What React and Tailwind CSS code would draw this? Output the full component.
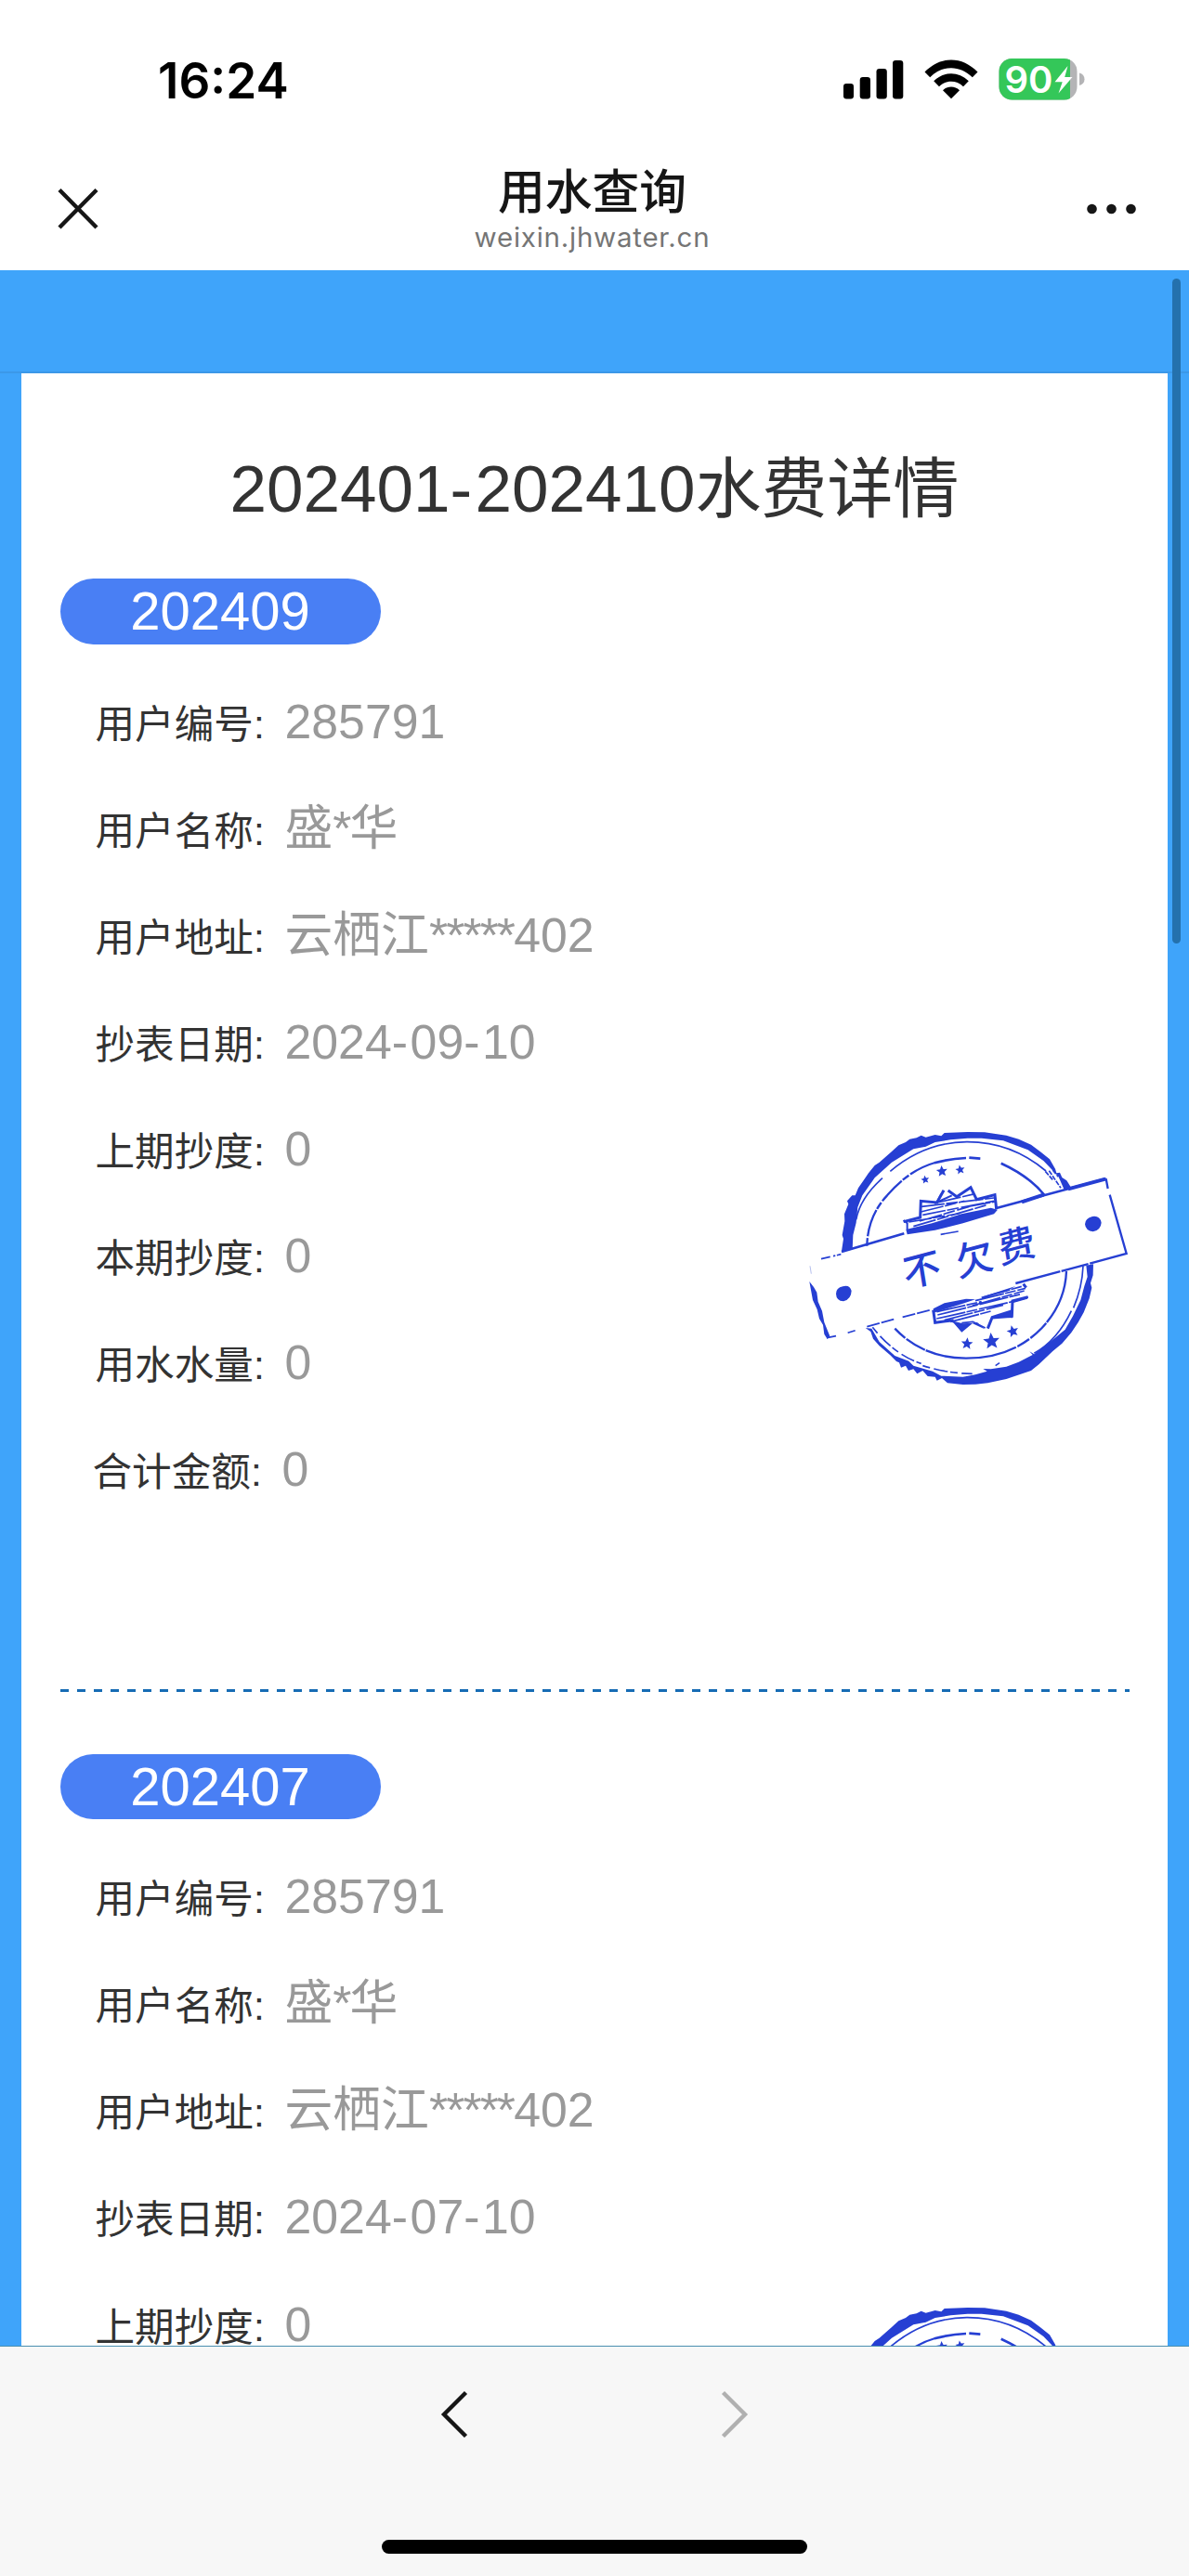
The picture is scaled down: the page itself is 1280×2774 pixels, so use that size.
import React from 'react';

const bills = [
  { month: '202409', date: '2024-09-10' },
  { month: '202407', date: '2024-07-10' },
];

const getRows = (bill) => [
  { label: '用户编号', value: '285791' },
  { label: '用户名称', value: '盛*华' },
  { label: '用户地址', value: '云栖江*****402' },
  { label: '抄表日期', value: bill.date },
  { label: '上期抄度', value: '0' },
  { label: '本期抄度', value: '0' },
  { label: '用水水量', value: '0' },
];

// tightens asterisks and loosens hyphens
const Spaced = ({ text }) =>
  text.split(/(\*+|-)/).map((part, i) => {
    if (part.startsWith('*')) return <span key={i} className="tracking-[-0.037em]">{part}</span>;
    if (part === '-') return <span key={i} className="tracking-[0.05em]">{part}</span>;
    return part;
  });

const Star = ({ x, y, r, rotate = 0 }) => (
  <polygon
    points="0,-10 2.8,-3.4 9.5,-3.1 4.2,1.6 5.9,8.1 0,4.6 -5.9,8.1 -4.2,1.6 -9.5,-3.1 -2.8,-3.4"
    transform={`translate(${x} ${y}) rotate(${rotate}) scale(${r / 10})`}
  />
);

const SignalIcon = () => (
  <svg className="h-[42px] w-[65px]" viewBox="0 0 65 42">
    <rect x="0" y="25" width="11" height="16.5" rx="3.2" />
    <rect x="17.7" y="18" width="11.3" height="23.5" rx="3.2" />
    <rect x="35.5" y="9" width="11.3" height="32.5" rx="3.2" />
    <rect x="53" y="0" width="11.3" height="41.5" rx="3.2" />
  </svg>
);

const WifiIcon = () => (
  <svg className="h-[43px] w-[58px]" viewBox="0 0 58 43">
    <path d="M0.5 13.5C17-4 41-4 57.5 13.5L51.8 19.2C38.5 5.8 19.5 5.8 6.2 19.2Z" />
    <path d="M10.2 23.3C21 12.5 37 12.5 47.8 23.3L42 29.2C34.5 22 23.5 22 16 29.2Z" />
    <path d="M20 33.2C25 28.3 33 28.3 38 33.2L29 42.3Z" />
  </svg>
);

const BatteryIcon = () => (
  <svg className="h-[45px] w-[94px] overflow-visible" viewBox="0 0 94 45">
    <defs>
      <clipPath id="charge">
        <rect width="77" height="45" />
      </clipPath>
    </defs>
    <rect x="0.5" width="84" height="44.5" rx="14" fill="#b4b4b6" />
    <rect x="0.5" width="84" height="44.5" rx="14" fill="#34c759" clipPath="url(#charge)" />
    <path d="M87 15.5Q92.5 17 92.5 22.3Q92.5 27.5 87 29Z" fill="#b4b4b6" />
    <text x="6.5" y="36.8" fontSize="40" fontWeight="600" textLength="52" lengthAdjust="spacingAndGlyphs" fill="#fff" className="font-['Inter',sans-serif]">
      90
    </text>
    <path d="M74.5 8L60.5 25.3H68.7L64.5 37.5L79.5 20H71.2Z" fill="#fff" />
  </svg>
);

const Stamp = () => (
  <svg className="absolute left-[827px] top-[577px] h-[310px] w-[390px]" viewBox="0 0 1170 930" fill="#263fd3" stroke="none">
    {/* outer ring */}
    <path d="M168 442L174 402L170 390L178 345L177 322L190 290L186 280L202 262L212 262L222 238L255 190L275 165L290 155L330 120L352 100L375 90L388 80L410 76L425 68L440 74L470 66L490 70L500 60L575 57L630 58L700 68L740 80L780 98L812 122L840 145L858 176L862 190L873 188L880 204L895 214L910 238L888 246L868 200L820 150L770 115L690 85L620 77L575 77L520 82L470 90L440 104L400 112L330 155L275 205L235 262L220 300L215 350L205 390L203 437Z" />
    <path d="M245 690L262 702L270 725L290 748L325 778L345 798L354 802L360 818L375 812L384 828L400 823L412 838L430 828L446 846L470 848L476 860L492 852L510 868L560 873L600 872L640 868L700 855L780 828L805 808L850 765L880 740L910 705L932 672L950 640L968 595L976 560L972 545L980 520L981 484L958 488L962 525L952 555L940 600L915 652L890 695L860 720L815 755L790 775L775 766L785 777L740 800L700 815L650 823L625 822L638 830L600 841L560 848L490 845L462 830L400 812L385 797L340 780L290 735L265 692Z" />
    {/* inner rings */}
    <g fill="none" stroke="#263fd3" strokeLinejoin="round">
      <path d="M215 340Q228 270 300 206" strokeWidth="5" />
      <path d="M325 184Q435 90 572 89Q715 88 828 183" strokeWidth="5" />
      <path d="M826 184L852 214M838 182L876 238M850 180L868 202" strokeWidth="5" strokeDasharray="16 4" />
      <path d="M250 425Q252 330 315 262Q385 180 470 156" strokeWidth="7" strokeDasharray="25 6 90 4" />
      <path d="M468 157Q520 143 570 141M580 140L616 143M683 158Q775 200 824 262" strokeWidth="8" />
      <path d="M340 692Q430 787 570 788Q720 788 815 690Q890 610 894 507" strokeWidth="7" strokeDasharray="45 5 70 3 300 5" />
      <path d="M268 688Q340 778 425 805M430 812Q510 837 590 838M678 803L665 812" strokeWidth="5" strokeDasharray="24 13 46 8" />
      <path d="M948 490Q945 560 917 625M910 635Q865 730 790 772" strokeWidth="5" />
    </g>
    {/* medal edges behind the banner */}
    <path d="M376 372L460 352L555 322L650 302L672 308L660 322L560 352L470 374L380 388Z" />
    <g fill="none" stroke="#263fd3">
      <path d="M368 347L422 333L424 280L476 285L498 245M512 246L540 266L585 236L604 275L663 260L668 306" strokeWidth="9" />
      <path d="M480 284L602 256M426 298L660 270M424 315L565 280M430 325L660 280M385 348L550 320M400 362L640 292M420 345L580 298M575 298L664 282M488 388L545 378" strokeWidth="5" strokeDasharray="75 5 38 8" />
      <path d="M368 342L380 352V372M490 257L475 285L524 262" strokeWidth="6" />
      <path d="M464 632L470 673L530 665M640 692L654 657L718 652L720 603L770 590M755 548L764 560" strokeWidth="9" />
      <path d="M475 638L620 605M478 648L750 580M475 660L720 605M500 665L690 616M520 670L650 636M590 618L758 570M600 602L762 562M620 592L750 556" strokeWidth="5" strokeDasharray="95 4 35 6" />
      <path d="M556 674L592 670L632 690" strokeWidth="5" />
    </g>
    <path d="M464 628L500 610L570 596L600 598L560 611L465 641ZM505 662L530 674L556 704L592 674L560 676ZM588 674L606 672L630 694ZM652 652L720 630V658L652 655ZM715 604L770 588L768 596L720 610ZM620 590L730 555L700 572Z" />
    {/* banner */}
    <g fill="none" stroke="#263fd3" strokeWidth="8">
      <path d="M102 467L166 452" strokeWidth="5" strokeDasharray="30 10 7 5" />
      <path d="M168 444L370 385M665 304L1022 208" />
      <path d="M750 283L820 260M900 241L1020 209" strokeWidth="12" />
      <path d="M1022 208L1028 240M1034 260L1088 450L730 546" strokeWidth="7" strokeDasharray="320 5 90 4" />
      <path d="M250 686L340 661M365 655L455 632M120 722L150 716M188 706L212 698" strokeWidth="5" strokeDasharray="42 6" />
    </g>
    <path d="M64 540L78 558L88 575L92 605L105 635L112 672L130 716L122 726L112 710L108 680L96 660L89 630L75 600Z" />
    <path d="M66 490L70 515" fill="none" stroke="#b5c0ee" strokeWidth="3" />
    <path d="M150 580Q150 560 172 556Q194 550 200 570Q199 598 174 604Q151 603 150 580ZM954 355Q955 335 978 330Q1002 326 1007 350Q1005 374 980 379Q956 376 954 355Z" />
    <Star x={438} y={211} r={14} rotate={-10} />
    <Star x={492} y={184} r={19} rotate={-5} />
    <Star x={551} y={179} r={16} rotate={-10} />
    <Star x={573} y={741} r={20} rotate={5} />
    <Star x={652} y={733} r={28} rotate={-5} />
    <Star x={721} y={701} r={20} rotate={-15} />
    <g className="font-['Noto_Sans_CJK_SC',sans-serif]" fontSize="122" fontWeight="500" textAnchor="middle">
      <text transform="translate(434 546) rotate(-15) skewX(-6)">不</text>
      <text transform="translate(604 510) rotate(-15) skewX(-6)">欠</text>
      <text transform="translate(740 468) rotate(-15) skewX(-6)">费</text>
    </g>
  </svg>
);

const Row = ({ label, value }) => (
  <div className="flex h-[115.1px] items-baseline leading-[115px]">
    <span className="w-[204px] text-[42.6px] leading-none text-[#333]">{label}:</span>
    <span className="text-[51.8px] text-[#999]">
      <Spaced text={value} />
    </span>
  </div>
);

const Bill = ({ bill }) => (
  <section className="relative h-[1265.7px] px-[41.5px]">
    <div className="flex h-[70.5px] w-[345px] items-center justify-center rounded-full bg-[#497ff4] text-[58px] leading-none text-white">
      {bill.month}
    </div>
    <div className="pl-[38px] pt-[26px]">
      {getRows(bill).map((row) => (
        <Row key={row.label} label={row.label} value={row.value} />
      ))}
      <div className="-ml-[3px]">
        <Row label="合计金额" value="0" />
      </div>
    </div>
    <div className="mt-[178.5px] h-[3px] bg-[repeating-linear-gradient(90deg,#166cb4_0_9px,transparent_9px_17.9px)]" />
  </section>
);

const App = () => {
  return (
    <div className="flex h-[2774px] w-[1280px] flex-col overflow-hidden bg-white font-['Liberation_Sans','Noto_Sans_CJK_SC',sans-serif]">
      <header className="h-[291px] shrink-0">
        <div className="flex h-[174px] items-start justify-between pl-[170px] pr-[111px] pt-[63px]">
          <span className="font-['Inter',sans-serif] text-[53px] font-semibold leading-[49px] text-black">16:24</span>
          <div className="flex items-center gap-[22px] text-black">
            <SignalIcon />
            <WifiIcon />
            <BatteryIcon />
          </div>
        </div>
        <div className="flex justify-between px-[55px]">
          <svg className="mt-[21px] h-[60px] w-[58px]" viewBox="0 0 58 60" fill="none" stroke="#161616" strokeWidth="4.4">
            <path d="M9 9.5L49 50M49 9.5L9 50" />
          </svg>
          <div className="flex flex-col items-center pr-[5px]">
            <h1 className="pt-[2px] text-[50.8px] font-medium leading-[64px] text-[#161616]">用水查询</h1>
            <p className="font-['Inter',sans-serif] text-[29.5px] leading-[30px] tracking-[0.75px] text-[#757575]">weixin.jhwater.cn</p>
          </div>
          <svg className="mt-[21px] h-[60px] w-[58px]" viewBox="0 0 58 60" fill="#161616">
            <circle cx="8.5" cy="30" r="5.3" />
            <circle cx="29.5" cy="30" r="5.3" />
            <circle cx="50.5" cy="30" r="5.3" />
          </svg>
        </div>
      </header>

      <main className="relative h-[2235px] shrink-0 overflow-hidden bg-[#3fa4fa] px-[23px]">
        <div className="-mx-[23px] h-[111px] border-b-2 border-[#3b98e8]" />
        <div className="bg-white">
          <h2 className="h-[221px] pt-[83px] text-center text-[71px] leading-[84px] text-[#333]">
            <Spaced text="202401-202410水费详情" />
          </h2>
          <div>
            {bills.map((bill) => (
              <div key={bill.month} className="relative">
                <Bill bill={bill} />
                <Stamp />
              </div>
            ))}
          </div>
        </div>
        <div className="absolute right-[9px] top-[9px] h-[716px] w-[9px] rounded-full bg-[#2471ad]" />
      </main>

      <footer className="flex h-[248px] shrink-0 flex-col items-center border-t border-[#4b8fb0] bg-[#f7f7f7] pt-[44px]">
        <div className="flex gap-[260px]">
          <svg className="h-[58px] w-[42px]" viewBox="0 0 42 58" fill="none" stroke="#161616" strokeWidth="4.4">
            <path d="M33.5 5.5L10 29L33.5 52.5" />
          </svg>
          <svg className="h-[58px] w-[42px]" viewBox="0 0 42 58" fill="none" stroke="#b0b0b0" strokeWidth="4.4">
            <path d="M8.5 5.5L32 29L8.5 52.5" />
          </svg>
        </div>
        <div className="mt-[106px] h-[15px] w-[458px] rounded-full bg-black" />
      </footer>
    </div>
  );
};

export default App;
